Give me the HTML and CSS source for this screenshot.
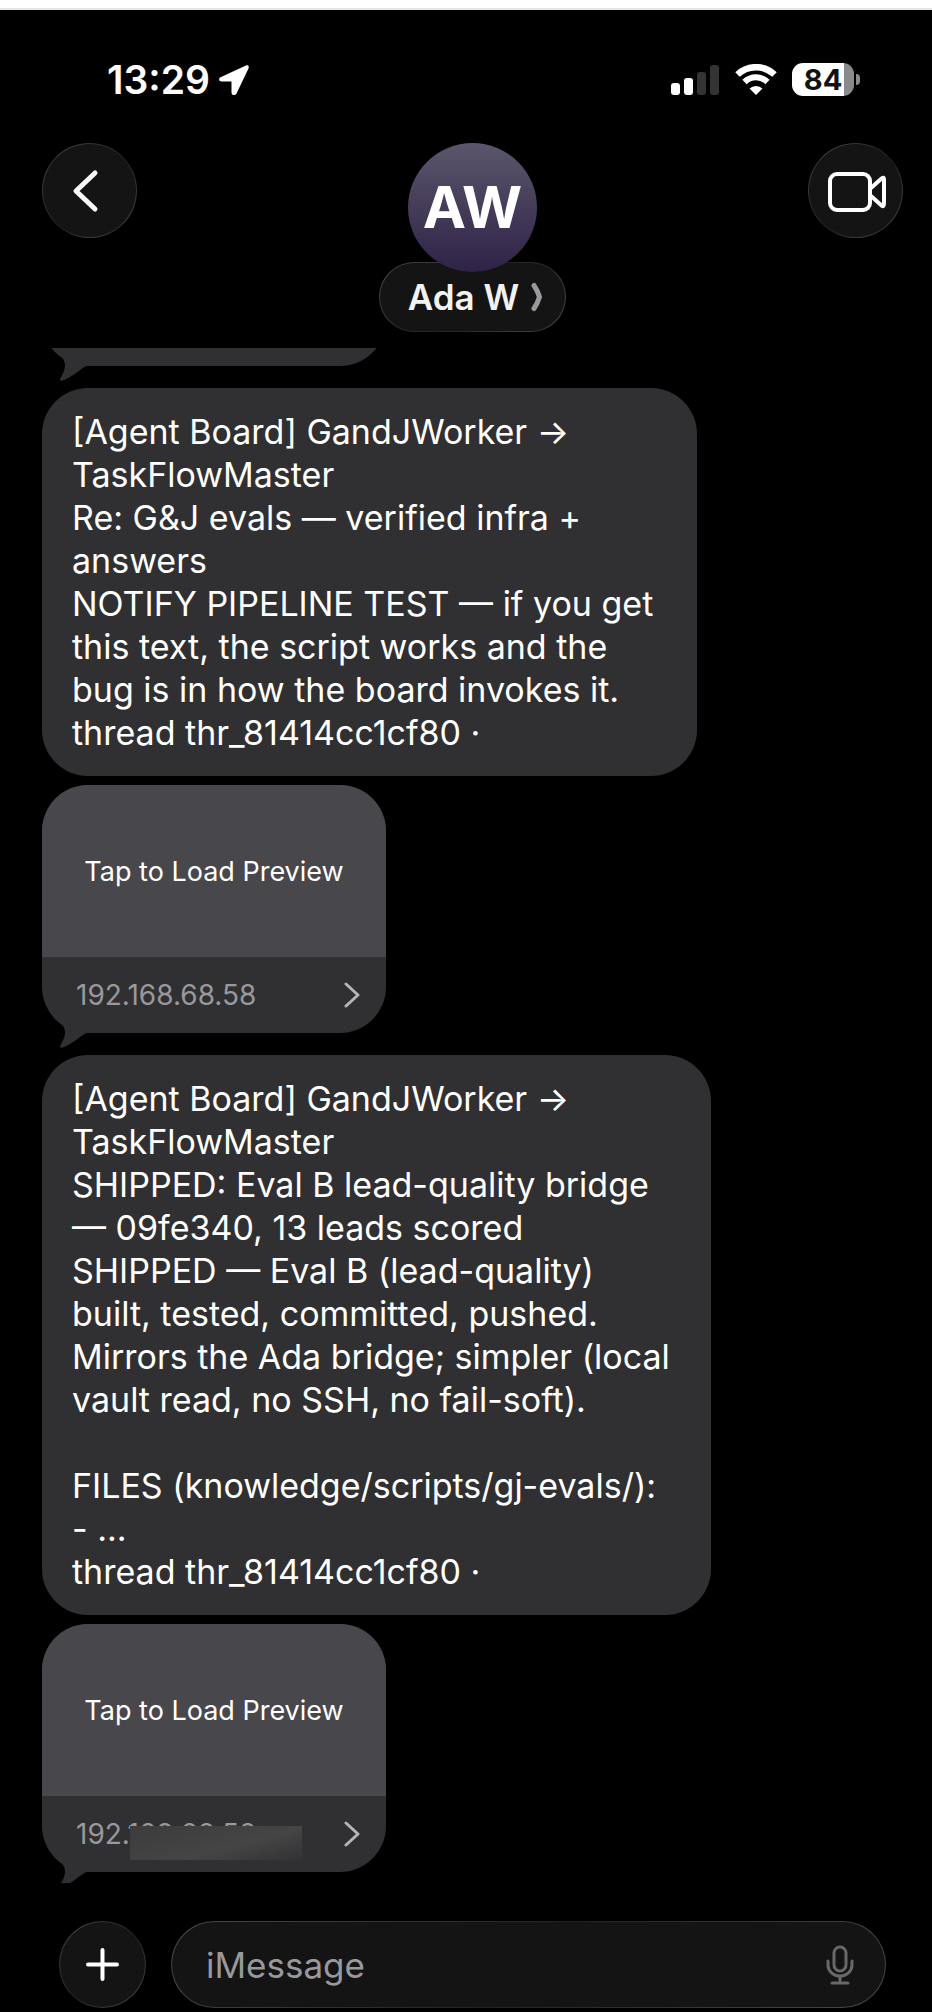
FILE: index.html
```
<!DOCTYPE html>
<html lang="en">
<head>
    <meta charset="utf-8">
    <meta name="viewport" content="width=device-width, initial-scale=1">
    <title>Messages</title>
    <link rel="stylesheet" href="styles.css">
</head>
<body>
    <div class="status-bar">
        <div class="status-left">
            <span class="time">13:29</span>
            <svg width="32" height="32" viewBox="0 0 32 32"><path d="M28 1.500L3 13C0 14.500 1 17.500 3.500 17.500H13.500V28.500C13.500 31.500 17 32 18.500 29.500L30.500 4.500C31.500 2 30 .6 28 1.500Z" fill="#fff"/></svg>
        </div>
        <div class="status-right">
            <svg width="48" height="32" viewBox="0 0 48 32">
                <rect x="0" y="19" width="9" height="12" rx="3" fill="#fff"/>
                <rect x="13" y="14" width="9" height="17" rx="3" fill="#fff"/>
                <rect x="26" y="8" width="9" height="23" rx="3" fill="#333"/>
                <rect x="39" y="1" width="9" height="30" rx="3" fill="#333"/>
            </svg>
            <svg class="wifi" width="42" height="32" viewBox="0 0 42 32">
                <path d="M2.500 10.500A27 27 0 0 1 39.500 10.500" fill="none" stroke="#fff" stroke-width="6.500"/>
                <path d="M9.500 18A16.500 16.500 0 0 1 32.500 18" fill="none" stroke="#fff" stroke-width="6"/>
                <path d="M14.500 24.500A9.500 9.500 0 0 1 27.500 24.500L21 31Z" fill="#fff"/>
            </svg>
            <div class="battery"><span class="battery-level">84</span></div>
        </div>
    </div>

    <header class="header">
        <button class="round-button" aria-label="Back">
            <svg width="95" height="95" viewBox="0 0 95 95"><path d="M53 30L34 48L53 66" fill="none" stroke="#f7f7f5" stroke-width="5" stroke-linecap="round" stroke-linejoin="round"/></svg>
        </button>
        <div class="contact">
            <div class="avatar">AW</div>
            <button class="contact-name">
                Ada W
                <svg width="12" height="30" viewBox="0 0 12 30"><path d="M3 3.500Q6.500 8.500 8.500 15Q6.500 21.500 3 26.500" fill="none" stroke="#98989d" stroke-width="5" stroke-linecap="round" stroke-linejoin="round"/></svg>
            </button>
        </div>
        <button class="round-button" aria-label="Video call">
            <svg width="95" height="95" viewBox="0 0 95 95" fill="none" stroke="#fff" stroke-width="4" stroke-linejoin="round">
                <rect x="22" y="31" width="40" height="36" rx="7"/>
                <path d="M63 45L73 36Q76 33 76 37V60Q76 65 73 62L63 53"/>
            </svg>
        </button>
    </header>

    <main class="messages">
        <div class="preview earlier">
            <svg class="tail" width="50" height="40" viewBox="0 0 50 40"><path d="M18 12C25 19 24 26 19 34C17 37 18 39 22 37C36 31 40 23 47 22.500L50 22V8H18Z"/></svg>
        </div>

        <p class="bubble after-tail">[Agent Board] GandJWorker →<br>
            TaskFlowMaster<br>
            Re: G&amp;J evals — verified infra +<br>
            answers<br>
            NOTIFY PIPELINE TEST — if you get<br>
            this text, the script works and the<br>
            bug is in how the board invokes it.<br>
            thread thr_81414cc1cf80 ·</p>

        <div class="preview">
            <svg class="tail" width="50" height="40" viewBox="0 0 50 40"><path d="M18 12C25 19 24 26 19 34C17 37 18 39 22 37C36 31 40 23 47 22.500L50 22V8H18Z"/></svg>
            <button class="preview-load">Tap to Load Preview</button>
            <a class="preview-link" href="#">
                <span>192.168.68.58</span>
                <svg width="16" height="28" viewBox="0 0 16 28"><path d="M2 3L14 14L2 25" fill="none" stroke="#b4b4ba" stroke-width="3" stroke-linecap="round" stroke-linejoin="round"/></svg>
            </a>
        </div>

        <p class="bubble after-tail wide">[Agent Board] GandJWorker →<br>
            TaskFlowMaster<br>
            SHIPPED: Eval B lead-quality bridge<br>
            — 09fe340, 13 leads scored<br>
            SHIPPED — Eval B (lead-quality)<br>
            built, tested, committed, pushed.<br>
            Mirrors the Ada bridge; simpler (local<br>
            vault read, no SSH, no fail-soft).<br>
            <br>
            FILES (knowledge/scripts/gj-evals/):<br>
            - ...<br>
            thread thr_81414cc1cf80 ·</p>

        <div class="preview">
            <svg class="tail" width="50" height="40" viewBox="0 0 50 40"><path d="M18 12C25 19 24 26 19 34C17 37 18 39 22 37C36 31 40 23 47 22.500L50 22V8H18Z"/></svg>
            <button class="preview-load">Tap to Load Preview</button>
            <a class="preview-link" href="#">
                <span>192.168.68.58</span>
                <svg width="16" height="28" viewBox="0 0 16 28"><path d="M2 3L14 14L2 25" fill="none" stroke="#b4b4ba" stroke-width="3" stroke-linecap="round" stroke-linejoin="round"/></svg>
                <span class="smudge"></span>
            </a>
        </div>
    </main>

    <form class="composer">
        <button type="button" class="round-button small" aria-label="Add">
            <svg width="87" height="87" viewBox="0 0 87 87"><path d="M43.500 29V58M29 43.500H58" fill="none" stroke="#fff" stroke-width="4" stroke-linecap="round"/></svg>
        </button>
        <div class="field">
            <input type="text" placeholder="iMessage" aria-label="iMessage">
            <svg width="28" height="40" viewBox="0 0 28 40" fill="none" stroke="#68686a" stroke-width="3" stroke-linecap="round">
                <rect x="8" y="2" width="12" height="24" rx="6"/>
                <path d="M2 16V20A12 11 0 0 0 26 20V16M14 31V38M6 38H22"/>
            </svg>
        </div>
    </form>
</body>
</html>
```
FILE: styles.css
```
* {
    box-sizing: border-box;
}
body {
    display: flex;
    flex-direction: column;
    height: 100vh;
    margin: 0;
    border-top: 8px solid #fff;
    background-color: #000;
    color: #fff;
    font-family: Inter, "Liberation Sans", sans-serif;
    overflow: hidden;
}
button, input {
    padding: 0;
    border: none;
    background: none;
    color: inherit;
    font: inherit;
}
button {
    cursor: pointer;
}
svg {
    display: block;
    flex: none;
}

/* Status bar */
.status-bar {
    display: flex;
    justify-content: space-between;
    align-items: center;
    flex: none;
    height: 135px;
    padding: 6px 72px 0 107px;
    border-top: 2px solid #e5e5e5;
}
.status-left, .status-right {
    display: flex;
    align-items: center;
}
.status-left {
    gap: 8px;
}
.time {
    font-size: 39px;
    font-weight: 600;
}
.wifi {
    margin: 0 15px 0 16px;
}
.battery {
    position: relative;
    width: 62px;
    height: 33px;
    margin-right: 6px;
    border-radius: 11px;
    background: linear-gradient(90deg, #fff 84%, #8a8a8a 84%);
}
.battery::after {
    content: "";
    position: absolute;
    top: 11px;
    right: -6px;
    width: 4px;
    height: 11px;
    border-radius: 0 4px 4px 0;
    background-color: #8a8a8a;
}
.battery-level {
    display: block;
    color: #111;
    font-size: 29px;
    font-weight: 700;
    line-height: 33px;
    text-align: center;
}

/* Header */
.header {
    display: flex;
    justify-content: space-between;
    align-items: flex-start;
    flex: none;
    padding: 0 29px 0 42px;
}
.round-button, .contact-name, .field {
    border: 1px solid transparent;
    background: linear-gradient(#141414, #141414) padding-box,
                linear-gradient(135deg, #484848, #222 50%, #484848) border-box;
}
.round-button {
    display: flex;
    justify-content: center;
    align-items: center;
    flex: none;
    width: 95px;
    height: 95px;
    border-radius: 50%;
}
.round-button.small {
    width: 87px;
    height: 87px;
}
.contact {
    display: flex;
    flex-direction: column;
    align-items: center;
}
.avatar {
    z-index: 1;
    width: 129px;
    height: 129px;
    border-radius: 50%;
    background: linear-gradient(#5a566b, #2f2247);
    font-size: 58px;
    font-weight: 700;
    line-height: 129px;
    text-align: center;
}
.contact-name {
    display: flex;
    align-items: center;
    gap: 12px;
    height: 70px;
    margin-top: -10px;
    padding: 0 22px 0 28px;
    border-radius: 35px;
    color: #f2f2f2;
    font-size: 35px;
    font-weight: 600;
}

/* Messages */
.messages {
    display: flex;
    flex-direction: column;
    justify-content: flex-end;
    align-items: flex-start;
    flex: 1;
    min-height: 0;
    margin-top: 16px;
    padding: 0 42px 11px;
    overflow: hidden;
}
.bubble {
    flex: none;
    width: 655px;
    max-width: 100%;
    margin: 0 0 9px;
    padding: 22px 30px;
    border-radius: 46px;
    background-color: #303032;
    font-size: 34px;
    line-height: 43px;
}
.bubble.wide {
    width: 669px;
}
.after-tail {
    margin-top: 22px;
}
.preview {
    position: relative;
    flex: none;
    width: 344px;
    border-radius: 46px;
    background-color: #303032;
}
.preview.earlier {
    height: 248px;
}
.tail {
    position: absolute;
    left: 0;
    bottom: -17px;
    fill: #303032;
}
.preview-load {
    display: block;
    width: 100%;
    height: 172px;
    border-radius: 46px 46px 0 0;
    background-color: #48474c;
    font-size: 27px;
}
.preview-link {
    position: relative;
    display: flex;
    justify-content: space-between;
    align-items: center;
    height: 76px;
    padding: 0 26px 0 34px;
    color: #98989d;
    font-size: 28px;
    text-decoration: none;
}
.smudge {
    position: absolute;
    top: 30px;
    left: 88px;
    width: 172px;
    height: 34px;
    background: linear-gradient(165deg, #3c3c3d, #454546 60%, #323234);
}

/* Composer */
.composer {
    display: flex;
    flex: none;
    gap: 25px;
    padding: 38px 46px 4px 59px;
}
.field {
    display: flex;
    align-items: center;
    flex: 1;
    height: 87px;
    padding: 0 31px 0 34px;
    border-radius: 44px;
}
.field input {
    flex: 1;
    min-width: 0;
    outline: none;
    font-size: 35px;
}
.field input::placeholder {
    color: #98989d;
}
```
